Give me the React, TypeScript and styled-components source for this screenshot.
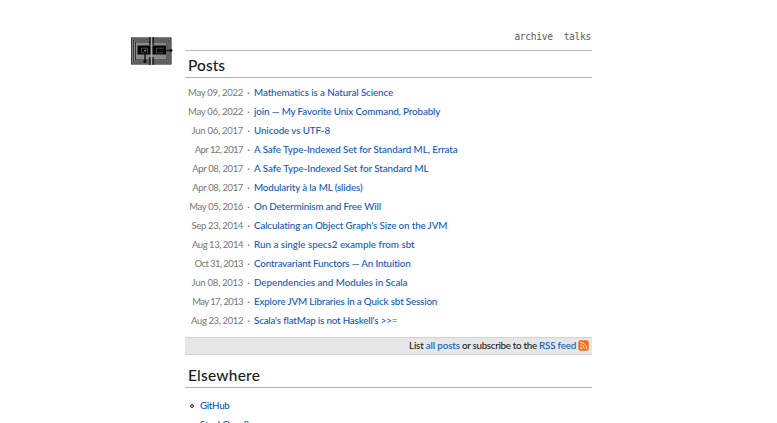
import React from "react";
import styled, { createGlobalStyle } from "styled-components";

const GlobalStyle = createGlobalStyle`
  *, *::before { box-sizing: border-box; }
  body {
    margin: 0;
    background: #fefefe;
    color: #222;
    font: 500 9.8px/19px Lato, "Open Sans", sans-serif;
  }
`;

const Page = styled.div`
  display: flex;
  height: 423px;
  padding: 26px 185px 0 130px;
  overflow: hidden;
`;

const LogoLink = styled.a`
  flex: 0 0 55px;
  padding-top: 11px;
  svg { display: block; }
`;

const Main = styled.main`
  flex: 1;
  min-width: 0;
`;

const Nav = styled.nav`
  display: flex;
  justify-content: flex-end;
  gap: 11px;
  height: 25px;
  padding: 2px 1px 0 0;
  border-bottom: 1px solid #bbb;
`;

const NavLink = styled.a`
  color: #5c5c5c;
  font: 9.6px/18px "DejaVu Sans Mono", monospace;
  letter-spacing: -0.31px;
`;

const Heading = styled.h1<{ $tracking: number; $height: number }>`
  margin: 0;
  height: ${(p) => p.$height}px;
  padding: 0 3px;
  display: flex;
  align-items: flex-end;
  border-bottom: 1px solid #b4b4b4;
  color: #1c1c1c;
  font-size: 15.5px;
  font-weight: 500;
  line-height: 24px;
  letter-spacing: ${(p) => p.$tracking}px;
`;

const PostList = styled.ul`
  margin: 0;
  padding: 5px 0 0;
  list-style: none;
`;

const PostRow = styled.li`
  display: grid;
  grid-template-columns: 58px 11px 1fr;
  height: 19px;
  white-space: nowrap;
`;

const PostDate = styled.time<{ $tracking: number }>`
  justify-self: end;
  color: #777;
  font-size: 9.5px;
  font-weight: 400;
  letter-spacing: ${(p) => p.$tracking}px;
`;

const Dot = styled.span`
  text-align: center;
  color: #777;
`;

const Link = styled.a<{ $tracking: number }>`
  color: #1259bd;
  letter-spacing: ${(p) => p.$tracking}px;
`;

const Subscribe = styled.p`
  display: flex;
  align-items: center;
  justify-content: flex-end;
  height: 18px;
  margin: 7px 0 0;
  padding: 0 3px 1px 0;
  border: solid #d2d2d4;
  border-width: 1px 0;
  background: #e7e7e7;
  line-height: 15px;
  white-space: pre;
  svg { display: block; margin-left: 2px; }
`;

const Words = styled.span<{ $tracking: number }>`
  letter-spacing: ${(p) => p.$tracking}px;
`;

const SiteList = styled.ul`
  margin: 0;
  padding: 8px 0 0 5px;
  list-style: none;
`;

const SiteRow = styled.li`
  display: flex;
  align-items: center;
  gap: 6px;
  height: 19px;
  &::before {
    content: "";
    width: 4px;
    height: 4px;
    margin-top: 1px;
    border: 1px solid #444;
    border-radius: 50%;
    background: #aaa;
  }
`;

const posts: { date: string; dateTracking: number; title: string; tracking: number }[] = [
  { date: "May 09, 2022", dateTracking: -0.25, title: "Mathematics is a Natural Science", tracking: -0.093 },
  { date: "May 06, 2022", dateTracking: -0.25, title: "join — My Favorite Unix Command, Probably", tracking: -0.13 },
  { date: "Jun 06, 2017", dateTracking: -0.255, title: "Unicode vs UTF-8", tracking: -0.095 },
  { date: "Apr 12, 2017", dateTracking: -0.57, title: "A Safe Type-Indexed Set for Standard ML, Errata", tracking: -0.083 },
  { date: "Apr 08, 2017", dateTracking: -0.36, title: "A Safe Type-Indexed Set for Standard ML", tracking: -0.06 },
  { date: "Apr 08, 2017", dateTracking: -0.36, title: "Modularity à la ML (slides)", tracking: -0.127 },
  { date: "May 05, 2016", dateTracking: -0.36, title: "On Determinism and Free Will", tracking: -0.133 },
  { date: "Sep 23, 2014", dateTracking: -0.34, title: "Calculating an Object Graph's Size on the JVM", tracking: -0.132 },
  { date: "Aug 13, 2014", dateTracking: -0.47, title: "Run a single specs2 example from sbt", tracking: -0.007 },
  { date: "Oct 31, 2013", dateTracking: -0.59, title: "Contravariant Functors — An Intuition", tracking: -0.169 },
  { date: "Jun 08, 2013", dateTracking: -0.255, title: "Dependencies and Modules in Scala", tracking: -0.032 },
  { date: "May 17, 2013", dateTracking: -0.61, title: "Explore JVM Libraries in a Quick sbt Session", tracking: -0.16 },
  { date: "Aug 23, 2012", dateTracking: -0.39, title: "Scala's flatMap is not Haskell's >>=", tracking: -0.179 },
];

const Logo = () => (
  <svg width="43" height="28" viewBox="0 0 43 28" fill="none">
    <rect x="1" y="0.5" width="40.5" height="27" fill="#8a8a8a" />
    <g stroke="#222" strokeWidth="0.8">
      <rect x="1.5" y="1" width="39.5" height="26" />
      <rect x="3.5" y="3" width="35.5" height="22" />
      <rect x="5.5" y="5" width="31.5" height="18" />
    </g>
    <path d="M21.5 0v28" stroke="#aaa" strokeWidth="1.2" />
    <path d="M19.8 0v8M23.2 0v8M19.8 20v8M23.2 20v8" stroke="#111" strokeWidth="1.2" />
    <path d="M7.5 8.5H20.5v9H7.5zM22.5 8.5H36v9H22.5z" fill="#060606" />
    <path d="M17.5 16V11.2h-6v4.6h3M34 11.2h-7.5v4.6H33" stroke="#777" strokeWidth="0.6" />
    <path d="M29 13.5h12" stroke="#111" strokeWidth="1.2" />
    <path d="M15 13.5V25" stroke="#111" strokeWidth="1.4" />
    <circle cx="15" cy="13.5" r="1.1" fill="#777" />
    <circle cx="15" cy="24.3" r="1.6" fill="#111" />
    <circle cx="41" cy="13.5" r="1.4" fill="#111" />
  </svg>
);

const RssIcon = () => (
  <svg width="11" height="11" viewBox="0 0 11 11" fill="none">
    <rect x="0.3" y="0.3" width="10.4" height="10.4" rx="2" fill="#fa6a1a" />
    <circle cx="3.2" cy="7.9" r="1" fill="#fff" />
    <path d="M2.3 4.8a4 4 0 0 1 4 4M2.3 2.4a6.4 6.4 0 0 1 6.4 6.4" stroke="#ffe9dc" strokeWidth="1" />
  </svg>
);

export default function App() {
  return (
    <>
      <GlobalStyle />
      <Page>
        <LogoLink><Logo /></LogoLink>
        <Main>
          <Nav>
            <NavLink>archive</NavLink>
            <NavLink>talks</NavLink>
          </Nav>
          <Heading $tracking={0.05} $height={27}>Posts</Heading>
          <PostList>
            {posts.map((post) => (
              <PostRow key={post.title}>
                <PostDate $tracking={post.dateTracking}>{post.date}</PostDate>
                <Dot>·</Dot>
                <Link $tracking={post.tracking}>{post.title}</Link>
              </PostRow>
            ))}
          </PostList>
          <Subscribe>
            <Words $tracking={-0.2}>List </Words>
            <Link $tracking={-0.13}>all posts</Link>
            <Words $tracking={-0.3}> or subscribe to the </Words>
            <Link $tracking={-0.19}>RSS feed</Link>
            <RssIcon />
          </Subscribe>
          <Heading $tracking={0.22} $height={33}>Elsewhere</Heading>
          <SiteList>
            <SiteRow><Link $tracking={-0.32}>GitHub</Link></SiteRow>
            <SiteRow><Link $tracking={-0.15}>StackOverflow</Link></SiteRow>
          </SiteList>
        </Main>
      </Page>
    </>
  );
}
